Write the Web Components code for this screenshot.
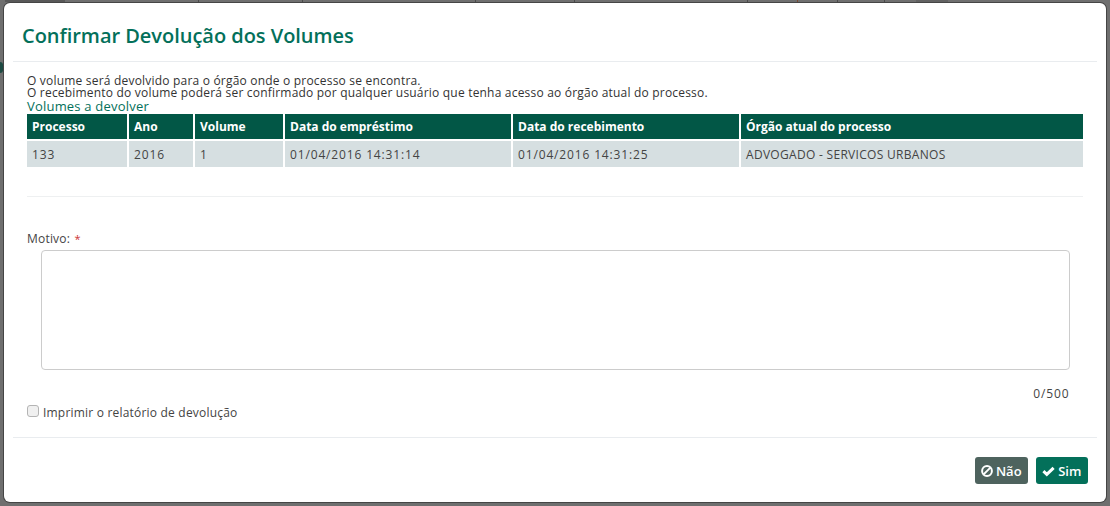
<!DOCTYPE html>
<html lang="pt">
<head>
<meta charset="utf-8">
<title>Confirmar Devolução dos Volumes</title>
<style>
  html, body { margin: 0; height: 100%; }
  body { background: #6f6f6f; overflow: hidden; font-family: "Open Sans", sans-serif; }
</style>
</head>
<body>
<page-backdrop></page-backdrop>
<dialog-box>
  <span slot="title">Confirmar Devolução dos Volumes</span>
  <p-note>O volume será devolvido para o órgão onde o processo se encontra.</p-note>
  <p-note>O recebimento do volume poderá ser confirmado por qualquer usuário que tenha acesso ao órgão atual do processo.</p-note>
  <volumes-table></volumes-table>
  <motivo-form></motivo-form>
  <action-button slot="footer" kind="no">Não</action-button>
  <action-button slot="footer" kind="yes">Sim</action-button>
</dialog-box>

<script>
// the page behind the modal only shows as a few ticks along the top edge
class PageBackdrop extends HTMLElement {
  constructor() {
    super();
    const ticks = [198, 302, 475, 574, 747, 837, 884];
    this.attachShadow({mode: 'open'}).innerHTML = `
      <style>
        :host { position: absolute; inset: 0; display: block; }
        i { position: absolute; display: block; }
        .tick { top: 0; width: 1px; height: 2px; background: #4a4a4a; }
        .orange { background: #7a4a30; }
        .patch { top: 0; left: 916px; width: 32px; height: 2px; background: #626262; }
        .clip { top: 0; left: 5px; width: 60px; height: 2px; background: #585858; }
        .blob { top: 62px; left: 0; width: 3px; height: 11px; background: #1d4a42; border-radius: 0 4px 4px 0; }
      </style>
      ${ticks.map(x => `<i class="tick" style="left:${x}px"></i>`).join('')}
      <i class="tick orange" style="left:797px"></i>
      <i class="patch"></i><i class="clip"></i><i class="blob"></i>`;
  }
}

class DialogBox extends HTMLElement {
  constructor() {
    super();
    this.attachShadow({mode: 'open'}).innerHTML = `
      <style>
        :host {
          position: relative;
          display: flex;
          flex-direction: column;
          box-sizing: border-box;
          width: 1102px;
          height: 499px;
          margin: 3px 0 0 4px;
          background: #fff;
          border-radius: 6px;
          box-shadow: 0 0 0 1px #454545;
        }
        header {
          margin: 0 9px;
          height: 59px;
          box-sizing: border-box;
          padding: 19px 0 0 9px;
          border-bottom: 1px solid #e9ecef;
          color: #03705a;
          font-size: 20px;
          font-weight: 600;
          line-height: 27px;
          letter-spacing: -.03px;
        }
        main {
          flex: 1;
          padding: 13px 27px 0 23px;
        }
        footer {
          margin: 0 9px;
          height: 65px;
          box-sizing: border-box;
          border-top: 1px solid #e9ecef;
          padding: 19px 9px 0 0;
          display: flex;
          justify-content: flex-end;
          gap: 8px;
        }
      </style>
      <header><slot name="title"></slot></header>
      <main><slot></slot></main>
      <footer><slot name="footer"></slot></footer>`;
  }
}

class PNote extends HTMLElement {
  constructor() {
    super();
    this.attachShadow({mode: 'open'}).innerHTML = `
      <style>
        :host {
          display: block;
          font-size: 12px;
          line-height: 12px;
          color: #333;
          letter-spacing: .2px;
          white-space: nowrap;
        }
      </style>
      <slot></slot>`;
  }
}

class VolumesTable extends HTMLElement {
  constructor() {
    super();
    this.attachShadow({mode: 'open'}).innerHTML = `
      <style>
        :host { display: block; }
        h2 {
          margin: -1px 0 0;
          font-size: 13px;
          font-weight: 400;
          line-height: 16px;
          letter-spacing: .2px;
          color: #03705a;
        }
        table {
          border-collapse: separate;
          border-spacing: 0;
          table-layout: fixed;
          width: 1056px;
          font-size: 12px;
        }
        th, td {
          padding: 0 0 0 5px;
          text-align: left;
          border-right: 2px solid #fff;
          box-sizing: border-box;
          white-space: nowrap;
        }
        th:last-child, td:last-child { border-right: 0; }
        th {
          height: 27px;
          background: #025746;
          color: #fff;
          font-weight: 700;
          border-bottom: 2px solid #fff;
        }
        td {
          height: 26px;
          background: #d6dfe1;
          color: #444;
          letter-spacing: .85px;
        }
        td:last-child { letter-spacing: .3px; }
        hr {
          margin: 29px 0 0;
          width: 1056px;
          border: 0;
          border-top: 1px solid #eef0f1;
        }
      </style>
      <h2>Volumes a devolver</h2>
      <table>
        <colgroup>
          <col style="width:102px"><col style="width:66px"><col style="width:90px">
          <col style="width:228px"><col style="width:228px"><col>
        </colgroup>
        <thead><tr>
          <th>Processo</th><th>Ano</th><th>Volume</th>
          <th>Data do empréstimo</th><th>Data do recebimento</th><th>Órgão atual do processo</th>
        </tr></thead>
        <tbody><tr>
          <td>133</td><td>2016</td><td>1</td>
          <td>01/04/2016 14:31:14</td><td>01/04/2016 14:31:25</td><td>ADVOGADO - SERVICOS URBANOS</td>
        </tr></tbody>
      </table>
      <hr>`;
  }
}

class MotivoForm extends HTMLElement {
  constructor() {
    super();
    this.attachShadow({mode: 'open'}).innerHTML = `
      <style>
        :host {
          display: block;
          width: 1056px;
          font-size: 12px;
          color: #444;
          letter-spacing: .2px;
        }
        .label { margin-top: 34px; line-height: 16px; }
        .label b { color: #c33; font-weight: 400; font-size: 11px; margin-left: 1px; }
        textarea {
          display: block;
          box-sizing: border-box;
          width: 1029px;
          height: 120px;
          margin: 3px 0 0 13.5px;
          border: 1px solid #ccc;
          border-radius: 4px;
          background: #fff;
          resize: none;
          outline: 0;
        }
        .count { margin-top: 16px; padding-right: 13.5px; line-height: 16px; text-align: right; letter-spacing: .9px; }
        label { display: flex; align-items: center; margin-top: 1px; height: 18px; }
        .box {
          width: 10px;
          height: 10px;
          margin-right: 4px;
          margin-top: -3px;
          border: 1px solid #b4b4b4;
          border-radius: 3px;
          background: #f0f0f0;
          flex: none;
        }
      </style>
      <div class="label">Motivo: <b>*</b></div>
      <textarea aria-label="Motivo"></textarea>
      <div class="count">0/500</div>
      <label><span class="box"></span>Imprimir o relatório de devolução</label>`;
  }
}

class ActionButton extends HTMLElement {
  constructor() {
    super();
    const no = this.getAttribute('kind') === 'no';
    const icon = no
      ? '<svg viewBox="0 0 12 12" width="12" height="12"><circle cx="6" cy="6" r="4.9" fill="none" stroke="#fff" stroke-width="2"/><path d="M2.6 9.4 9.4 2.6" stroke="#fff" stroke-width="2"/></svg>'
      : '<svg viewBox="0 0 13 12" width="13" height="12"><path d="M1.4 6.2 4.8 9.4 11.6 2.8" fill="none" stroke="#fff" stroke-width="3"/></svg>';
    this.attachShadow({mode: 'open'}).innerHTML = `
      <style>
        :host {
          display: inline-flex;
          align-items: center;
          justify-content: center;
          gap: 3px;
          box-sizing: border-box;
          height: 27px;
          width: 52.5px;
          border-radius: 3px;
          background: ${no ? '#4e635e' : '#03705a'};
          color: #fff;
          font-size: 13px;
          font-weight: 600;
        }
        svg { display: block; }
      </style>
      ${icon}<slot></slot>`;
  }
}

customElements.define('page-backdrop', PageBackdrop);
customElements.define('dialog-box', DialogBox);
customElements.define('p-note', PNote);
customElements.define('volumes-table', VolumesTable);
customElements.define('motivo-form', MotivoForm);
customElements.define('action-button', ActionButton);
</script>
</body>
</html>
